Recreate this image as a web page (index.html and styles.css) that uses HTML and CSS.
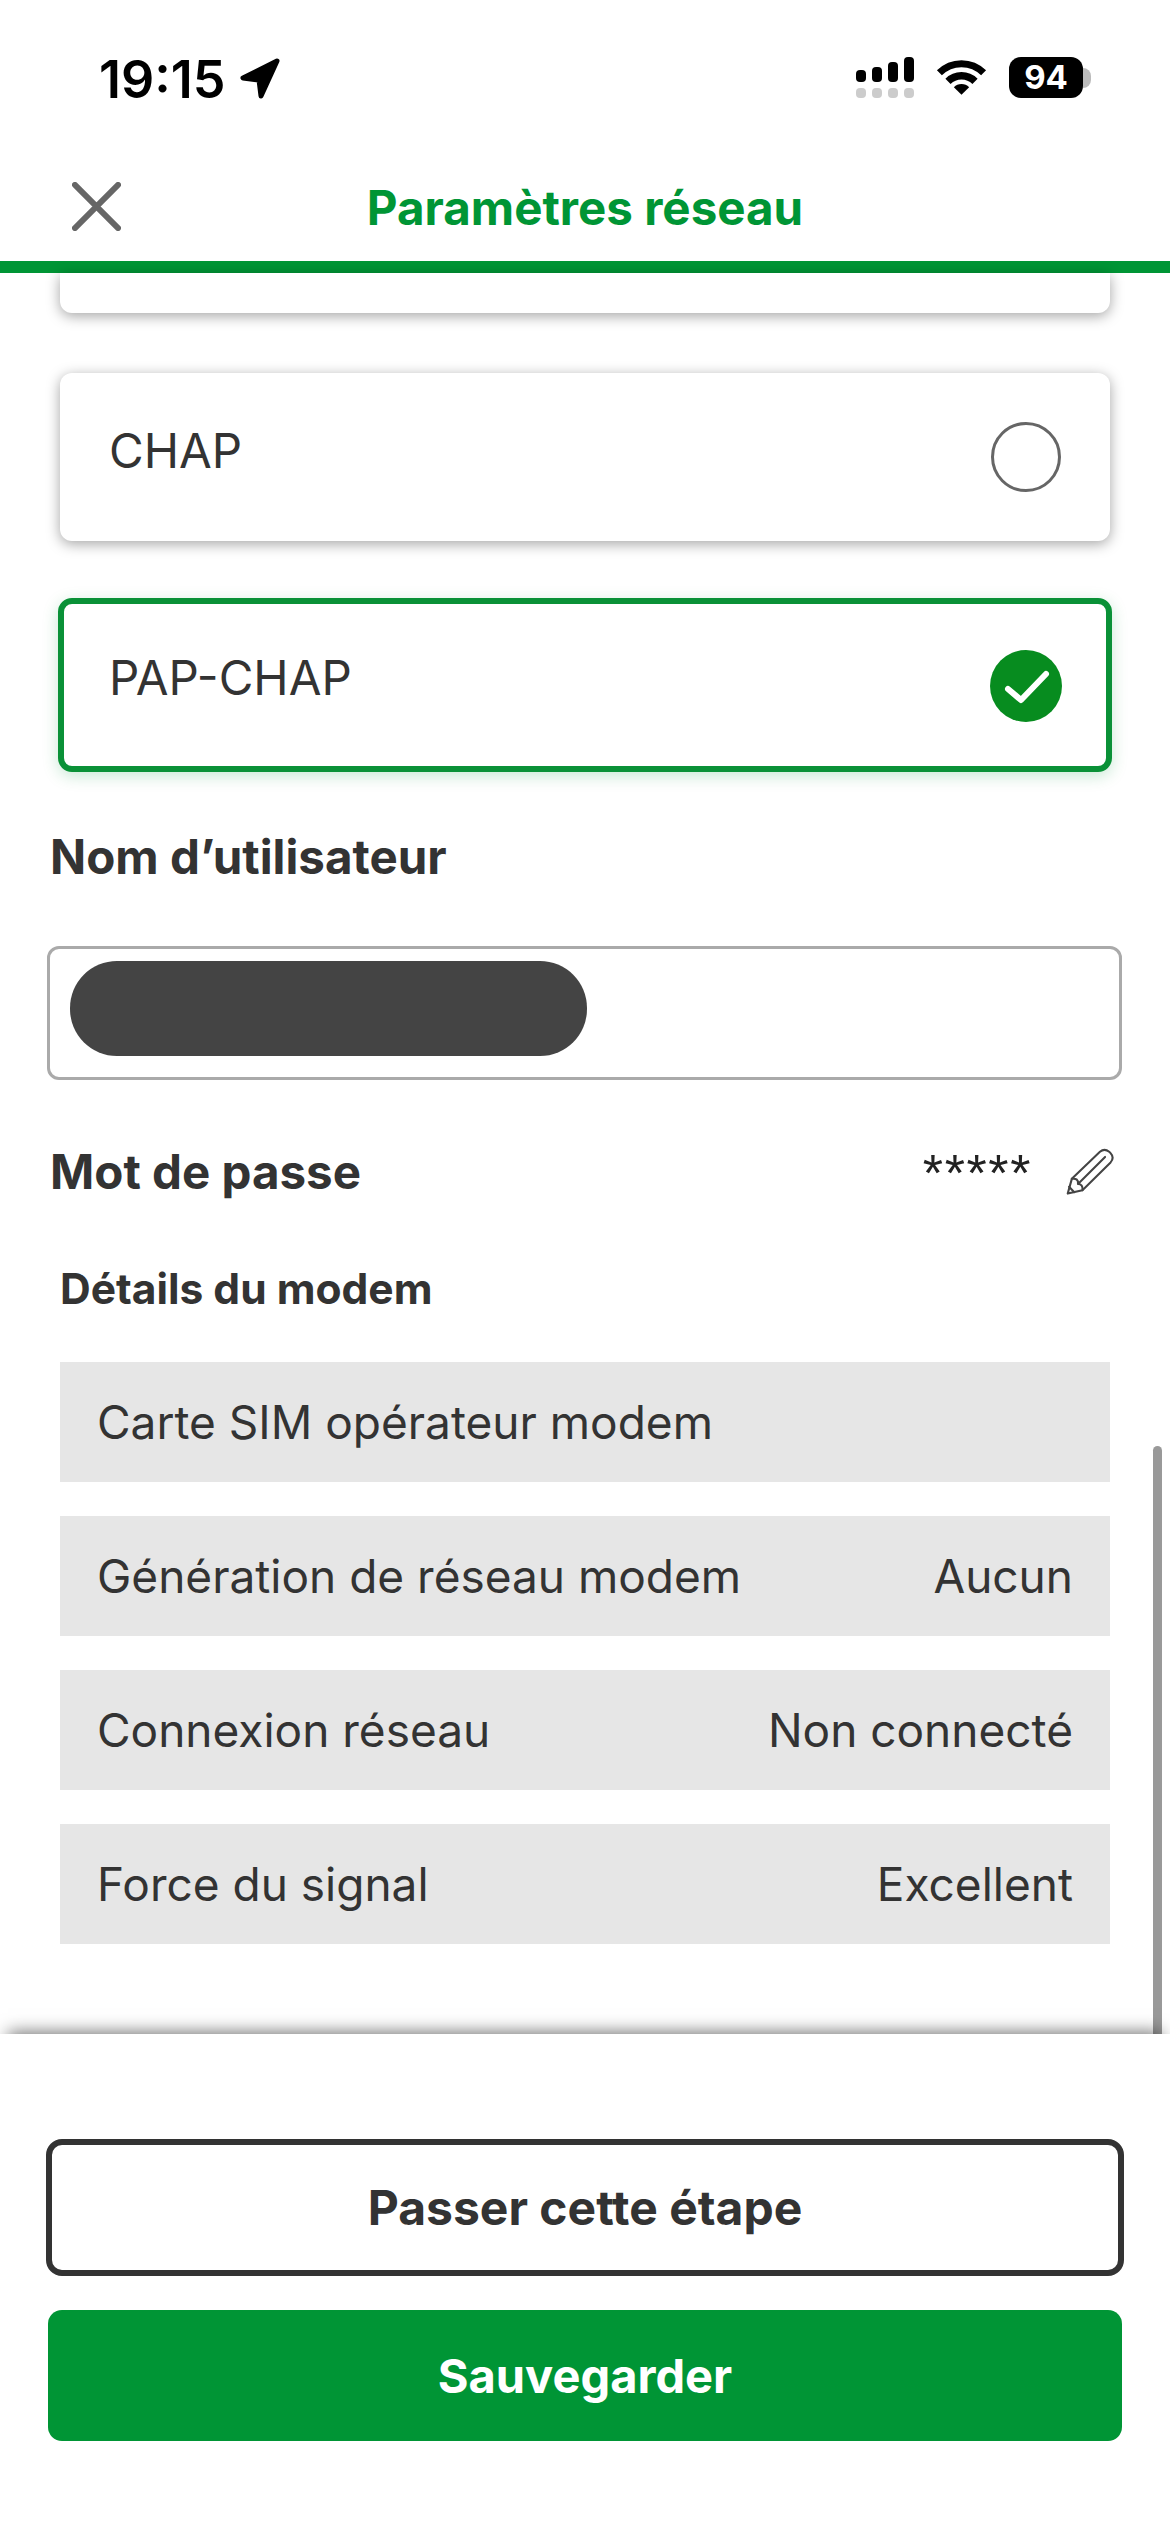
FILE: index.html
```html
<!DOCTYPE html>
<html lang="fr">
<head>
<meta charset="utf-8">
<title>Paramètres réseau</title>
<link rel="stylesheet" href="styles.css">
</head>
<body>
<div class="screen">
  <div class="status">
    <div class="status-left">
      <span class="time">19:15</span>
      <svg class="loc" viewBox="238 56 44 44"><path d="M277 60 L243 77 L259 79 L261 95 Z" fill="#000" stroke="#000" stroke-width="5" stroke-linejoin="round"/></svg>
    </div>
    <div class="status-right">
      <svg class="signal" viewBox="0 0 58 41">
        <rect x="0" y="13" width="10" height="12" rx="4"/><rect x="16" y="10" width="10" height="15" rx="4"/><rect x="32" y="5" width="10" height="20" rx="4"/><rect x="48" y="0" width="10" height="25" rx="4"/>
        <g fill="#ccc"><rect x="0" y="31" width="10" height="10" rx="4"/><rect x="16" y="31" width="10" height="10" rx="4"/><rect x="32" y="31" width="10" height="10" rx="4"/><rect x="48" y="31" width="10" height="10" rx="4"/></g>
      </svg>
      <svg class="wifi" viewBox="345 55 160 115"><g fill="none" stroke="#000"><path stroke-width="22" d="M355.7 97.7A98 98 0 0 1 494.3 97.7"/><path stroke-width="23" d="M382.6 124.6A60 60 0 0 1 467.4 124.6"/></g><path d="M425 167L401 143A34 34 0 0 1 449 143Z"/></svg>
      <div class="battery"><span class="battery-body">94</span><span class="battery-cap"></span></div>
    </div>
  </div>

  <header class="header">
    <svg class="close" viewBox="0 0 50 50"><path d="M3 3L47 47M47 3L3 47" stroke="#666" stroke-width="6" stroke-linecap="round" fill="none"/></svg>
    <h1 class="title">Paramètres réseau</h1>
  </header>

  <main class="content">
    <div class="card card-tail"></div>
    <div class="card card-chap">
      <span>CHAP</span>
      <span class="radio"></span>
    </div>
    <div class="card card-selected">
      <span>PAP-CHAP</span>
      <svg class="check" viewBox="0 0 72 72"><circle cx="36" cy="36" r="36" fill="#078c1f"/><path d="M18 39L31 50L56 24" fill="none" stroke="#fff" stroke-width="6" stroke-linecap="round" stroke-linejoin="round"/></svg>
    </div>

    <div class="label label-user">Nom d’utilisateur</div>
    <div class="input"><span class="redacted"></span></div>

    <div class="password">
      <span class="label">Mot de passe</span>
      <div class="password-value">
        <span class="stars">*****</span>
        <svg class="pencil" viewBox="498 55 140 140"><g fill="none" stroke="#444" stroke-width="6" stroke-linejoin="round" stroke-linecap="round"><path d="M503 188L515 145L597 66Q610 55 624 66L628 70Q640 83 628 97L546 178Z"/><path d="M515 145Q535 142 533 160L612 81M533 160Q548 160 546 178M507 168L522 184"/></g></svg>
      </div>
    </div>

    <div class="section-title">Détails du modem</div>
    <div class="rows">
      <div class="row"><span>Carte SIM opérateur modem</span></div>
      <div class="row"><span>Génération de réseau modem</span><span>Aucun</span></div>
      <div class="row"><span>Connexion réseau</span><span>Non connecté</span></div>
      <div class="row"><span>Force du signal</span><span>Excellent</span></div>
    </div>
    <div class="scrollbar"></div>
  </main>

  <footer class="footer">
    <button class="btn btn-outline">Passer cette étape</button>
    <button class="btn btn-primary">Sauvegarder</button>
  </footer>
</div>
</body>
</html>
```
FILE: styles.css
```css
* { box-sizing: border-box; }
html, body { margin: 0; padding: 0; background: #fff; }
body { font-family: Inter, "Liberation Sans", sans-serif; color: #333; }
.screen { width: 1170px; height: 2532px; display: flex; flex-direction: column; overflow: hidden; background: #fff; }

.status { height: 120px; flex: none; display: flex; justify-content: space-between; align-items: flex-start; padding: 57px 79px 0 99px; }
.status-left { display: flex; align-items: center; gap: 12px; }
.time { font-size: 52px; line-height: 41px; font-weight: 600; color: #000; }
.loc { width: 44px; height: 44px; }
.status-right { display: flex; align-items: flex-start; gap: 22px; }
.signal { width: 58px; height: 41px; }
.wifi { width: 51px; height: 37px; margin-top: 2px; }
.battery { display: flex; align-items: center; }
.battery-body { width: 74px; height: 41px; background: #000; border-radius: 12px; color: #fff; font-size: 33px; font-weight: 700; line-height: 41px; text-align: center; }
.battery-cap { width: 8px; height: 20px; background: #bbb; border-radius: 0 10px 10px 0; }

.header { height: 153px; flex: none; border-bottom: 12px solid #009535; display: flex; align-items: center; padding: 32px 0 0 72px; }
.close { width: 49px; height: 49px; flex: none; }
.title { flex: 1; margin: 2px 72px 0 -49px; text-align: center; font-size: 47.5px; line-height: 56px; font-weight: 700; color: #009535; }

.content { flex: 1; min-height: 0; position: relative; padding: 0 60px; }
.card { background: #fff; border-radius: 12px; box-shadow: 0 3px 14px rgba(0,0,0,.36); display: flex; justify-content: space-between; font-size: 47.5px; line-height: 56px; }
.card-tail { height: 40px; border-radius: 0 0 12px 12px; }
.card-chap { height: 168px; margin-top: 60px; padding: 50px 49px 0 49px; }
.radio { width: 70px; height: 70px; border: 3px solid #666; border-radius: 50%; margin-top: -1px; }
.card-selected { height: 174px; margin: 57px -2px 0; padding: 46px 44px 0 45px; border: 6px solid #0a9137; border-radius: 14px; box-shadow: 0 4px 16px rgba(0,150,60,.22); }
.check { width: 72px; height: 72px; margin-top: 0; }

.label { font-size: 47.5px; line-height: 56px; font-weight: 700; color: #333; }
.label-user { margin: 57px 0 0 -10px; }
.input { margin: 61px -12px 0 -13px; height: 134px; border: 3px solid #aaa; border-radius: 12px; padding: 12px 20px; }
.redacted { display: block; width: 517px; height: 95px; background: #444; border-radius: 47px; }
.password { margin: 64px 0 0 -10px; display: flex; justify-content: space-between; align-items: center; }
.password-value { display: flex; align-items: center; gap: 34px; margin-right: -4px; }
.stars { font-size: 52px; line-height: 52px; color: #222; font-family: "Liberation Sans", sans-serif; font-weight: 400; letter-spacing: 1.6px; height: 40px; margin-top: -10px; }
.pencil { width: 48px; height: 48px; }
.section-title { font-size: 42.5px; line-height: 50px; font-weight: 700; margin-top: 64px; }
.rows { display: flex; flex-direction: column; gap: 34px; margin-top: 48px; }
.row { height: 120px; background: #e6e6e6; display: flex; justify-content: space-between; align-items: center; padding: 0 37px; font-size: 46px; line-height: 56px; }
.scrollbar { position: absolute; right: 8px; top: 1173px; bottom: 0; width: 9px; background: #999; border-radius: 5px 5px 0 0; }

.footer { height: 498px; flex: none; position: relative; background: #fff; box-shadow: 0 -10px 16px -8px rgba(0,0,0,.55); padding: 105px 46px 0; display: flex; flex-direction: column; }
.btn { font-family: inherit; font-size: 48px; font-weight: 700; display: block; width: 100%; }
.btn-outline { height: 137px; background: #fff; border: 6px solid #333; border-radius: 16px; color: #333; }
.btn-primary { height: 131px; margin: 34px 2px 0; width: auto; background: #009535; border: none; border-radius: 14px; color: #fff; font-size: 47px; }
```
